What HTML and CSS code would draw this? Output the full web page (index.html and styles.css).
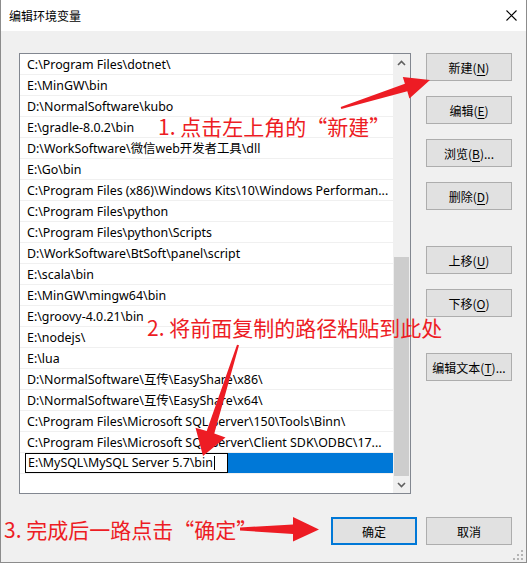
FILE: index.html
```html
<!DOCTYPE html>
<html lang="zh-CN">
<head>
<meta charset="utf-8">
<title>编辑环境变量</title>
<link rel="stylesheet" href="styles.css">
</head>
<body>
<div class="window">
  <div class="titlebar">
    <span class="title">编辑环境变量</span>
    <svg class="close" width="11" height="11" viewBox="0 0 11 11"><path d="M0.5 0.5 L10.5 10.5 M10.5 0.5 L0.5 10.5" stroke="#000" stroke-width="1.1" fill="none"/></svg>
  </div>
  <div class="body">
    <div class="main">
      <div class="listbox">
        <div class="rows">
          <div class="row">C:\Program Files\dotnet\</div>
          <div class="row">E:\MinGW\bin</div>
          <div class="row">D:\NormalSoftware\kubo</div>
          <div class="row">E:\gradle-8.0.2\bin</div>
          <div class="row">D:\WorkSoftware\微信web开发者工具\dll</div>
          <div class="row">E:\Go\bin</div>
          <div class="row">C:\Program Files (x86)\Windows Kits\10\Windows Performan...</div>
          <div class="row">C:\Program Files\python</div>
          <div class="row">C:\Program Files\python\Scripts</div>
          <div class="row">D:\WorkSoftware\BtSoft\panel\script</div>
          <div class="row">E:\scala\bin</div>
          <div class="row">E:\MinGW\mingw64\bin</div>
          <div class="row">E:\groovy-4.0.21\bin</div>
          <div class="row">E:\nodejs\</div>
          <div class="row">E:\lua</div>
          <div class="row">D:\NormalSoftware\互传\EasyShare\x86\</div>
          <div class="row">D:\NormalSoftware\互传\EasyShare\x64\</div>
          <div class="row">C:\Program Files\Microsoft SQL Server\150\Tools\Binn\</div>
          <div class="row">C:\Program Files\Microsoft SQL Server\Client SDK\ODBC\17...</div>
          <div class="row edit-row">
            <span class="editbox">E:\MySQL\MySQL Server 5.7\bin<span class="caret"></span></span>
            <span class="selfill"></span>
          </div>
        </div>
        <div class="scrollbar">
          <div class="sb-btn"><svg width="9" height="6" viewBox="0 0 9 6"><path d="M1 5 L4.5 1.5 L8 5" stroke="#606060" stroke-width="1.6" fill="none"/></svg></div>
          <div class="track"><div class="thumb"></div></div>
          <div class="sb-btn"><svg width="9" height="6" viewBox="0 0 9 6"><path d="M1 1 L4.5 4.5 L8 1" stroke="#606060" stroke-width="1.6" fill="none"/></svg></div>
        </div>
      </div>
      <div class="side">
        <div class="btn">新建(<u>N</u>)</div>
        <div class="btn">编辑(<u>E</u>)</div>
        <div class="btn">浏览(<u>B</u>)...</div>
        <div class="btn">删除(<u>D</u>)</div>
        <div class="btn gap-lg">上移(<u>U</u>)</div>
        <div class="btn">下移(<u>O</u>)</div>
        <div class="btn gap-lg">编辑文本(<u>T</u>)...</div>
      </div>
    </div>
    <div class="footer">
      <div class="btn default">确定</div>
      <div class="btn">取消</div>
    </div>
  </div>
  <svg class="grip" width="11" height="11" viewBox="0 0 11 11">
    <rect x="8" y="0" width="2" height="2" fill="#b4b4b4"/>
    <rect x="4" y="4" width="2" height="2" fill="#b4b4b4"/>
    <rect x="8" y="4" width="2" height="2" fill="#b4b4b4"/>
    <rect x="0" y="8" width="2" height="2" fill="#b4b4b4"/>
    <rect x="4" y="8" width="2" height="2" fill="#b4b4b4"/>
    <rect x="8" y="8" width="2" height="2" fill="#b4b4b4"/>
  </svg>

  <div class="note note1">1. 点击左上角的“新建”</div>
  <div class="note note2">2. 将前面复制的路径粘贴到此处</div>
  <div class="note note3">3. 完成后一路点击“确定”</div>
  <svg class="arrows" width="527" height="563" viewBox="0 0 527 563">
    <polygon fill="#ed1c24" points="340.7,107 404.9,83.7 402.8,77 430,80 409.4,98.5 407.3,91.3 341.3,109"/>
    <polygon fill="#ed1c24" points="239,345.3 214.3,433.4 225.5,437.5 203,456 195.5,427.8 206.7,431 237,344.7"/>
    <polygon fill="#ed1c24" points="240,527.5 293,524.5 293,517 319,529.5 293,541.5 293,534 240,530.5"/>
  </svg>
</div>
</body>
</html>
```

FILE: styles.css
```css
* { box-sizing: border-box; }

html, body {
  margin: 0;
  padding: 0;
  background: #ffffff;
}

body {
  width: 527px;
  height: 563px;
  overflow: hidden;
  font-family: "Segoe UI", "Noto Sans", "Noto Sans CJK SC", sans-serif;
  font-size: 12.4px;
  color: #000;
}

.window {
  position: relative;
  width: 527px;
  height: 563px;
  border: 1px solid #8c8c8c;
  border-top: none;
  background: #f0f0f0;
  display: flex;
  flex-direction: column;
}

.titlebar {
  height: 31px;
  flex: none;
  background: #ffffff;
  display: flex;
  align-items: center;
  justify-content: space-between;
  padding: 0 9px 0 8px;
}

.title {
  font-family: "Noto Sans CJK SC", sans-serif;
  font-size: 12px;
  line-height: 16px;
  margin-top: 1px;
}

.close {
  display: block;
}

.body {
  flex: 1;
  display: flex;
  flex-direction: column;
  padding: 22px 14px 0 18px;
}

.main {
  display: flex;
  gap: 15px;
  height: 441px;
}

.listbox {
  width: 392px;
  height: 441px;
  border: 1px solid #828790;
  background: #ffffff;
  display: flex;
}

.rows {
  flex: 1;
  min-width: 0;
  display: flex;
  flex-direction: column;
}

.row {
  height: 21px;
  line-height: 21px;
  border-bottom: 1px solid #f0f0f0;
  padding-left: 7px;
  white-space: nowrap;
  overflow: hidden;
  text-overflow: ellipsis;
}

.edit-row {
  display: flex;
  padding-left: 5px;
  text-overflow: clip;
}

.editbox {
  width: 203px;
  height: 20px;
  border: 1px solid #000;
  background: #fff;
  line-height: 18px;
  padding-left: 2px;
  display: flex;
  align-items: center;
}

.caret {
  display: inline-block;
  width: 1px;
  height: 14px;
  background: #000;
  margin-left: 1px;
}

.selfill {
  flex: 1;
  height: 20px;
  background: #0078d7;
}

.scrollbar {
  width: 17px;
  flex: none;
  background: #f0f0f0;
  display: flex;
  flex-direction: column;
}

.sb-btn {
  height: 17px;
  flex: none;
  display: flex;
  align-items: center;
  justify-content: center;
}

.track {
  flex: 1;
  display: flex;
  flex-direction: column;
  justify-content: flex-end;
  padding: 0 1px;
}

.thumb {
  height: 219px;
  background: #cdcdcd;
}

.side {
  display: flex;
  flex-direction: column;
  gap: 15px;
}

.btn {
  width: 86px;
  height: 28px;
  border: 1px solid #adadad;
  background: #e1e1e1;
  display: flex;
  align-items: center;
  justify-content: center;
  font-family: "Noto Sans CJK SC", sans-serif;
  font-size: 12px;
  white-space: nowrap;
}

.btn u {
  text-decoration-thickness: 1px;
  text-underline-offset: 2px;
}

.side .gap-lg {
  margin-top: 21px;
}

.footer {
  margin-top: 23px;
  display: flex;
  justify-content: flex-end;
  gap: 9px;
}

.btn.default {
  border: 2px solid #0078d7;
}

.grip {
  position: absolute;
  right: 2px;
  bottom: 1px;
}

.note {
  position: absolute;
  font-family: "Noto Sans CJK SC", sans-serif;
  font-size: 21px;
  line-height: 24px;
  color: #ed1c24;
  white-space: nowrap;
}

.note1 { left: 157px; top: 114px; }
.note2 { left: 146px; top: 315px; }
.note3 { left: 3px; top: 517px; }

.arrows {
  position: absolute;
  left: -1px;
  top: 0;
  pointer-events: none;
}
```
